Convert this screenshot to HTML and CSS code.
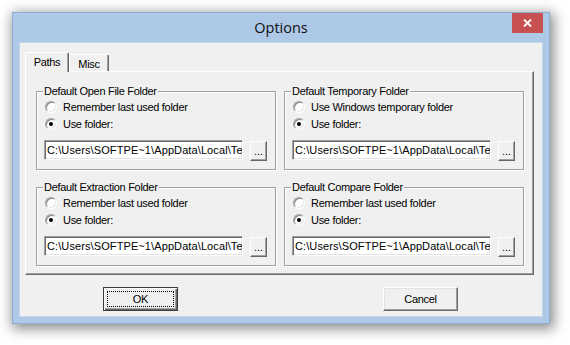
FILE: index.html
```html
<!DOCTYPE html>
<html>
<head>
<meta charset="utf-8">
<title>Options</title>
<link rel="stylesheet" href="styles.css">
</head>
<body>
<div class="window">
  <div class="titlebar">
    <span class="spacer"></span>
    <span class="title">Options</span>
    <span class="close"><svg width="9" height="8" viewBox="0 0 9 8"><path d="M1 0.5 L8 7.5 M8 0.5 L1 7.5" stroke="#fff" stroke-width="1.8" fill="none"/></svg></span>
  </div>
  <div class="client">
    <div class="tabs">
      <div class="tab selected">Paths</div>
      <div class="tab misc">Misc</div>
    </div>
    <div class="panel">
      <fieldset class="group">
        <legend>Default Open File Folder</legend>
        <div class="row"><span class="radio"></span><span>Remember last used folder</span></div>
        <div class="row"><span class="radio checked"></span><span>Use folder:</span></div>
        <div class="pathrow"><div class="edit">C:\Users\SOFTPE~1\AppData\Local\Temp</div><div class="browse">...</div></div>
      </fieldset>
      <fieldset class="group">
        <legend>Default Temporary Folder</legend>
        <div class="row"><span class="radio"></span><span>Use Windows temporary folder</span></div>
        <div class="row"><span class="radio checked"></span><span>Use folder:</span></div>
        <div class="pathrow"><div class="edit">C:\Users\SOFTPE~1\AppData\Local\Temp</div><div class="browse">...</div></div>
      </fieldset>
      <fieldset class="group">
        <legend>Default Extraction Folder</legend>
        <div class="row"><span class="radio"></span><span>Remember last used folder</span></div>
        <div class="row"><span class="radio checked"></span><span>Use folder:</span></div>
        <div class="pathrow"><div class="edit">C:\Users\SOFTPE~1\AppData\Local\Temp</div><div class="browse">...</div></div>
      </fieldset>
      <fieldset class="group">
        <legend>Default Compare Folder</legend>
        <div class="row"><span class="radio"></span><span>Remember last used folder</span></div>
        <div class="row"><span class="radio checked"></span><span>Use folder:</span></div>
        <div class="pathrow"><div class="edit">C:\Users\SOFTPE~1\AppData\Local\Temp</div><div class="browse">...</div></div>
      </fieldset>
    </div>
    <div class="buttons">
      <button class="btn default"><span class="focus">OK</span></button>
      <button class="btn">Cancel</button>
    </div>
  </div>
</div>
</body>
</html>
```
FILE: styles.css
```css
html, body {
  margin: 0;
  padding: 0;
  background: #ffffff;
}
body {
  width: 570px;
  height: 345px;
  overflow: hidden;
  font-family: "Liberation Sans", Arial, sans-serif;
  font-size: 11px;
  letter-spacing: -0.3px;
  color: #000;
}
.window {
  box-sizing: border-box;
  margin: 12px 0 0 12px;
  width: 538px;
  height: 312px;
  border: 1px solid #8eafd1;
  background: #adc9e7;
  padding: 0 6px 6px 6px;
  box-shadow: 2px 3px 12px 2px rgba(0, 0, 0, 0.45);
  display: flex;
  flex-direction: column;
}
.titlebar {
  height: 29px;
  display: grid;
  grid-template-columns: 1fr auto 1fr;
  align-items: start;
}
.title {
  font-family: "Open Sans", "Noto Sans", sans-serif;
  font-size: 14.5px;
  letter-spacing: 0;
  line-height: 29px;
  color: #101010;
}
.close {
  justify-self: end;
  width: 31px;
  height: 20px;
  background: #c75050;
  display: flex;
  align-items: center;
  justify-content: center;
}
.client {
  box-sizing: border-box;
  height: 275px;
  border: 1px solid #c4d6ea;
  background: #f0f0f0;
  padding: 9px 8px 5px 5px;
  display: flex;
  flex-direction: column;
}
.tabs {
  display: flex;
  align-items: flex-end;
  height: 19px;
}
.tab {
  box-sizing: border-box;
  background: #f0f0f0;
  border-left: 1px solid #fff;
  border-top: 1px solid #fff;
  border-right: 1px solid #696969;
  border-radius: 2px 2px 0 0;
  box-shadow: inset -1px 0 0 #a0a0a0;
  line-height: 17px;
  text-align: center;
}
.tab.selected {
  width: 44px;
  height: 20px;
  margin-bottom: -1px;
  position: relative;
  z-index: 1;
  padding-top: 1px;
}
.tab.misc {
  width: 40px;
  height: 17px;
  line-height: 18px;
}
.panel {
  box-sizing: border-box;
  height: 204px;
  border-left: 1px solid #fff;
  border-top: 1px solid #fff;
  border-right: 1px solid #696969;
  border-bottom: 1px solid #696969;
  box-shadow: inset -1px -1px 0 #a0a0a0;
  padding: 13px 9px 8px 10px;
  display: grid;
  grid-template-columns: 240px 240px;
  grid-template-rows: 85px 85px;
  column-gap: 8px;
  row-gap: 11px;
}
.group {
  box-sizing: border-box;
  margin: 0;
  min-width: 0;
  height: 85px;
  border: 1px solid #a0a0a0;
  box-shadow: inset 1px 1px 0 #fff, 1px 1px 0 #fff;
  padding: 0 8px 9px 7px;
}
.group legend {
  padding: 0 1px;
  margin-left: -1px;
  line-height: 13px;
  background: #f0f0f0;
}
.row {
  height: 17px;
  display: flex;
  align-items: center;
  gap: 6px;
  padding-left: 1px;
}
.radio {
  box-sizing: border-box;
  width: 12px;
  height: 12px;
  border-radius: 50%;
  background: #fff;
  border: 1px solid;
  border-color: #a0a0a0 #ffffff #ffffff #a0a0a0;
  box-shadow: inset 1px 1px 0 #8a8a8a, inset -1px -1px 0 #e3e3e3;
  display: flex;
  align-items: center;
  justify-content: center;
}
.radio.checked::after {
  content: "";
  width: 4px;
  height: 4px;
  border-radius: 50%;
  background: #000;
}
.pathrow {
  margin-top: 8px;
  display: flex;
  align-items: flex-start;
  gap: 7px;
}
.edit {
  box-sizing: border-box;
  width: 200px;
  height: 20px;
  background: #fff;
  border: 1px solid;
  border-color: #a0a0a0 #ffffff #ffffff #a0a0a0;
  box-shadow: inset 1px 1px 0 #696969, inset -1px -1px 0 #e3e3e3;
  padding: 0 2px;
  line-height: 18px;
  letter-spacing: 0.1px;
  white-space: nowrap;
  overflow: hidden;
}
.browse {
  box-sizing: border-box;
  width: 17px;
  height: 20px;
  margin-top: 1px;
  background: #f0f0f0;
  border: 1px solid;
  border-color: #ffffff #696969 #696969 #ffffff;
  box-shadow: inset -1px -1px 0 #a0a0a0;
  text-align: center;
  line-height: 18px;
  letter-spacing: 0;
}
.buttons {
  margin-top: 12px;
  display: flex;
  padding-left: 78px;
  gap: 205px;
}
.btn {
  box-sizing: border-box;
  width: 75px;
  height: 24px;
  margin: 0;
  padding: 0;
  font: inherit;
  letter-spacing: inherit;
  color: #000;
  background: #f0f0f0;
  border: 1px solid;
  border-color: #ffffff #696969 #696969 #ffffff;
  box-shadow: inset -1px -1px 0 #a0a0a0, inset 1px 1px 0 #e3e3e3;
  display: flex;
  align-items: center;
  justify-content: center;
}
.btn.default {
  border: 1px solid #3c3c3c;
  box-shadow: inset 1px 1px 0 #fff, inset -1px -1px 0 #696969, inset -2px -2px 0 #a0a0a0;
  padding: 3px;
  align-items: stretch;
}
.btn .focus {
  flex: 1;
  border: 1px dotted #000;
  display: flex;
  align-items: center;
  justify-content: center;
}
```
